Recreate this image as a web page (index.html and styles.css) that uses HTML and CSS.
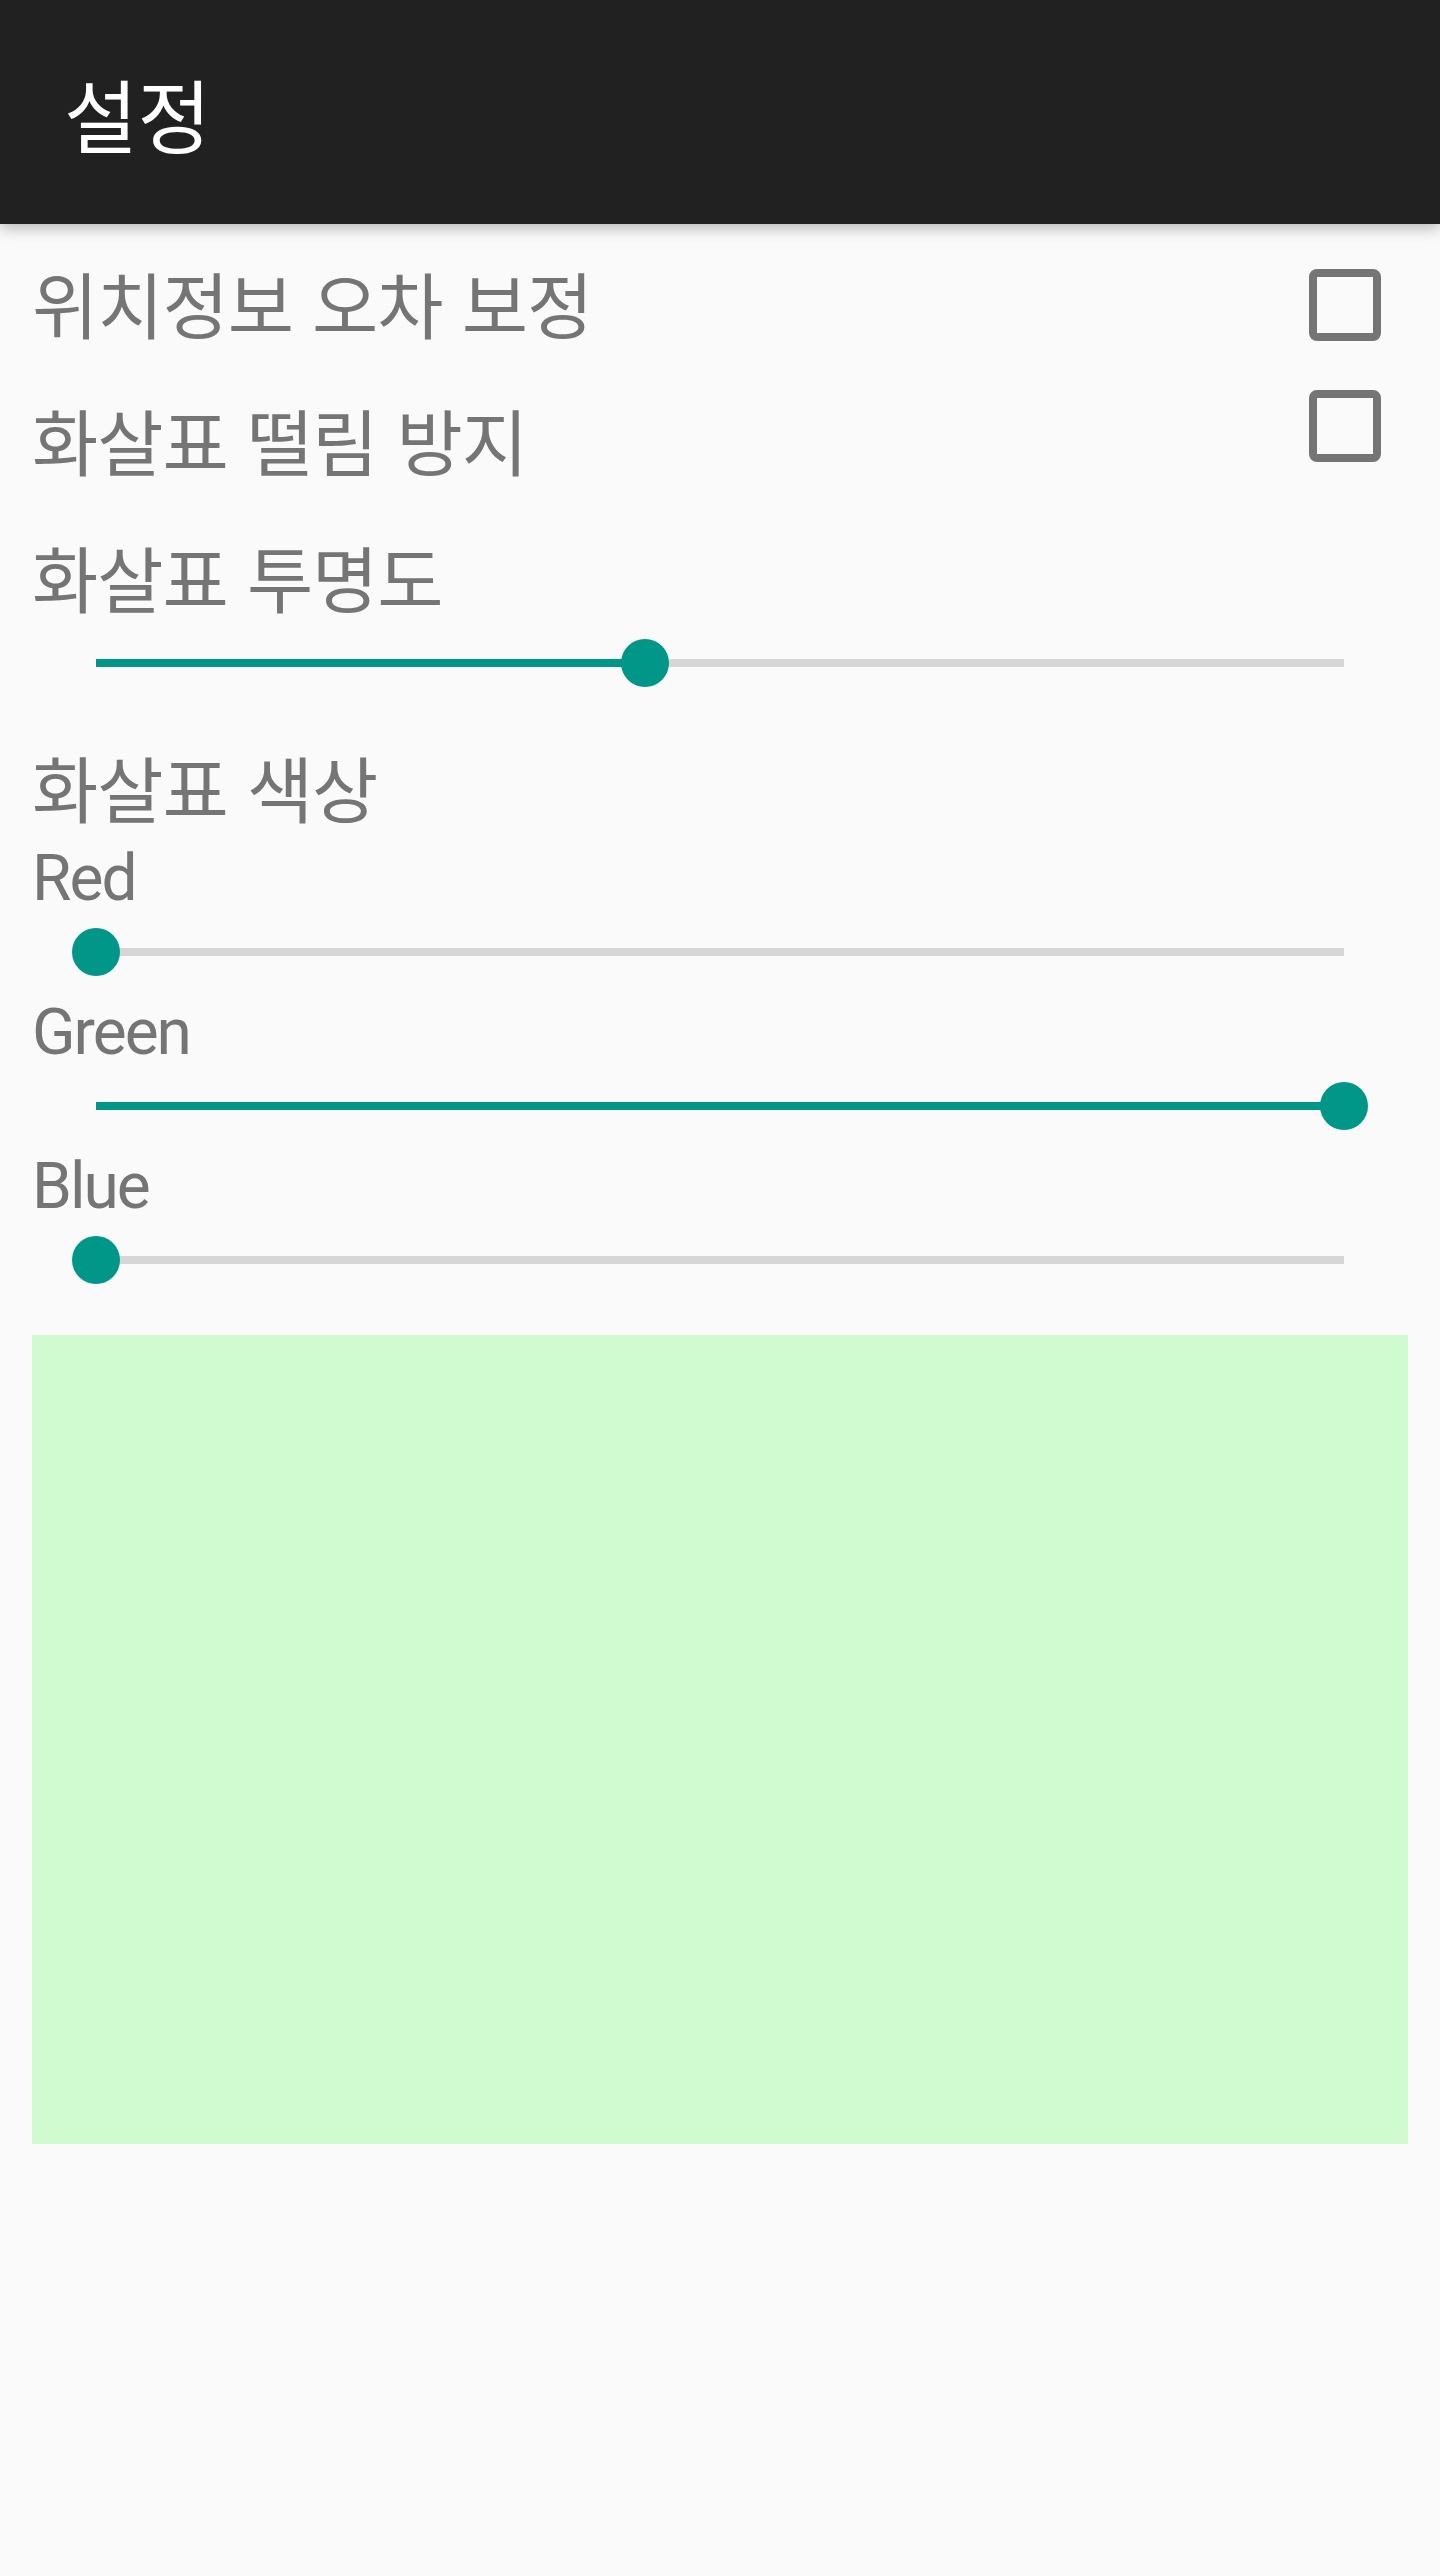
FILE: index.html
```html
<!DOCTYPE html>
<html lang="ko">
<head>
<meta charset="utf-8">
<title>설정</title>
<link rel="stylesheet" href="styles.css">
</head>
<body>
<header class="appbar">
  <h1 class="appbar-title">설정</h1>
</header>
<main class="content">
  <div class="pref-row pref-row-first">
    <span class="pref-title">위치정보 오차 보정</span>
    <span class="checkbox checkbox-first"></span>
  </div>
  <div class="pref-row pref-row-second">
    <span class="pref-title pref-title-second">화살표 떨림 방지</span>
    <span class="checkbox"></span>
  </div>

  <h2 class="section-title section-alpha">화살표 투명도</h2>
  <div class="seekbar seekbar-alpha">
    <div class="seek-track">
      <div class="seek-progress" style="width:44%"></div>
      <div class="seek-thumb" style="left:44%"></div>
    </div>
  </div>

  <h2 class="section-title section-color">화살표 색상</h2>

  <div class="color-label">Red</div>
  <div class="seekbar">
    <div class="seek-track">
      <div class="seek-progress" style="width:0%"></div>
      <div class="seek-thumb" style="left:0%"></div>
    </div>
  </div>

  <div class="color-label">Green</div>
  <div class="seekbar">
    <div class="seek-track">
      <div class="seek-progress" style="width:100%"></div>
      <div class="seek-thumb" style="left:100%"></div>
    </div>
  </div>

  <div class="color-label">Blue</div>
  <div class="seekbar">
    <div class="seek-track">
      <div class="seek-progress" style="width:0%"></div>
      <div class="seek-thumb" style="left:0%"></div>
    </div>
  </div>

  <div class="preview" style="background:#d0fbd0"></div>
</main>
</body>
</html>
```

FILE: styles.css
```css
html, body {
  margin: 0;
  padding: 0;
}

body {
  background: #fafafa;
  width: 1440px;
  min-height: 2576px;
  font-family: "Noto Sans CJK KR", Roboto, sans-serif;
}

.appbar {
  position: relative;
  z-index: 2;
  height: 224px;
  background: #212121;
  display: flex;
  align-items: center;
  padding-left: 64px;
  box-shadow: 0 4px 14px rgba(0, 0, 0, 0.28);
}

.appbar-title {
  margin: 0;
  font-family: "Noto Sans CJK KR", sans-serif;
  font-weight: 400;
  font-size: 80px;
  line-height: 80px;
  color: #ffffff;
}

.content {
  padding: 0 32px;
  display: flex;
  flex-direction: column;
}

.pref-row {
  display: flex;
  justify-content: space-between;
  align-items: flex-start;
  padding-right: 27px;
}

.pref-row-first {
  margin-top: 42px;
}

.pref-row-second {
  margin-top: 49px;
}

.pref-title {
  font-family: "Noto Sans CJK KR", sans-serif;
  font-size: 72px;
  line-height: 72px;
  color: #757575;
  letter-spacing: -1px;
}

.pref-title-second {
  margin-top: 13px;
}

.checkbox {
  box-sizing: border-box;
  width: 72px;
  height: 72px;
  border: 8px solid #757575;
  border-radius: 8px;
}

.checkbox-first {
  margin-top: 3px;
}

.section-title {
  margin: 0;
  font-family: "Noto Sans CJK KR", sans-serif;
  font-weight: 400;
  font-size: 72px;
  line-height: 72px;
  color: #757575;
  letter-spacing: -1px;
}

.section-alpha {
  margin-top: 65px;
}

.section-color {
  margin-top: 63px;
}

.seekbar {
  height: 48px;
  padding: 0 64px;
  margin-top: 17px;
  display: flex;
  align-items: center;
}

.seekbar-alpha {
  margin-top: 27px;
}

.seek-track {
  position: relative;
  flex: 1;
  height: 8px;
  background: #d6d6d6;
}

.seek-progress {
  height: 100%;
  background: #009688;
}

.seek-thumb {
  position: absolute;
  top: 50%;
  width: 48px;
  height: 48px;
  margin-left: -24px;
  margin-top: -24px;
  border-radius: 50%;
  background: #009688;
}

.color-label {
  margin-top: 25px;
  font-family: Roboto, sans-serif;
  font-size: 64px;
  line-height: 64px;
  color: #757575;
  letter-spacing: -2px;
}

.preview {
  margin-top: 51px;
  height: 809px;
}
```
